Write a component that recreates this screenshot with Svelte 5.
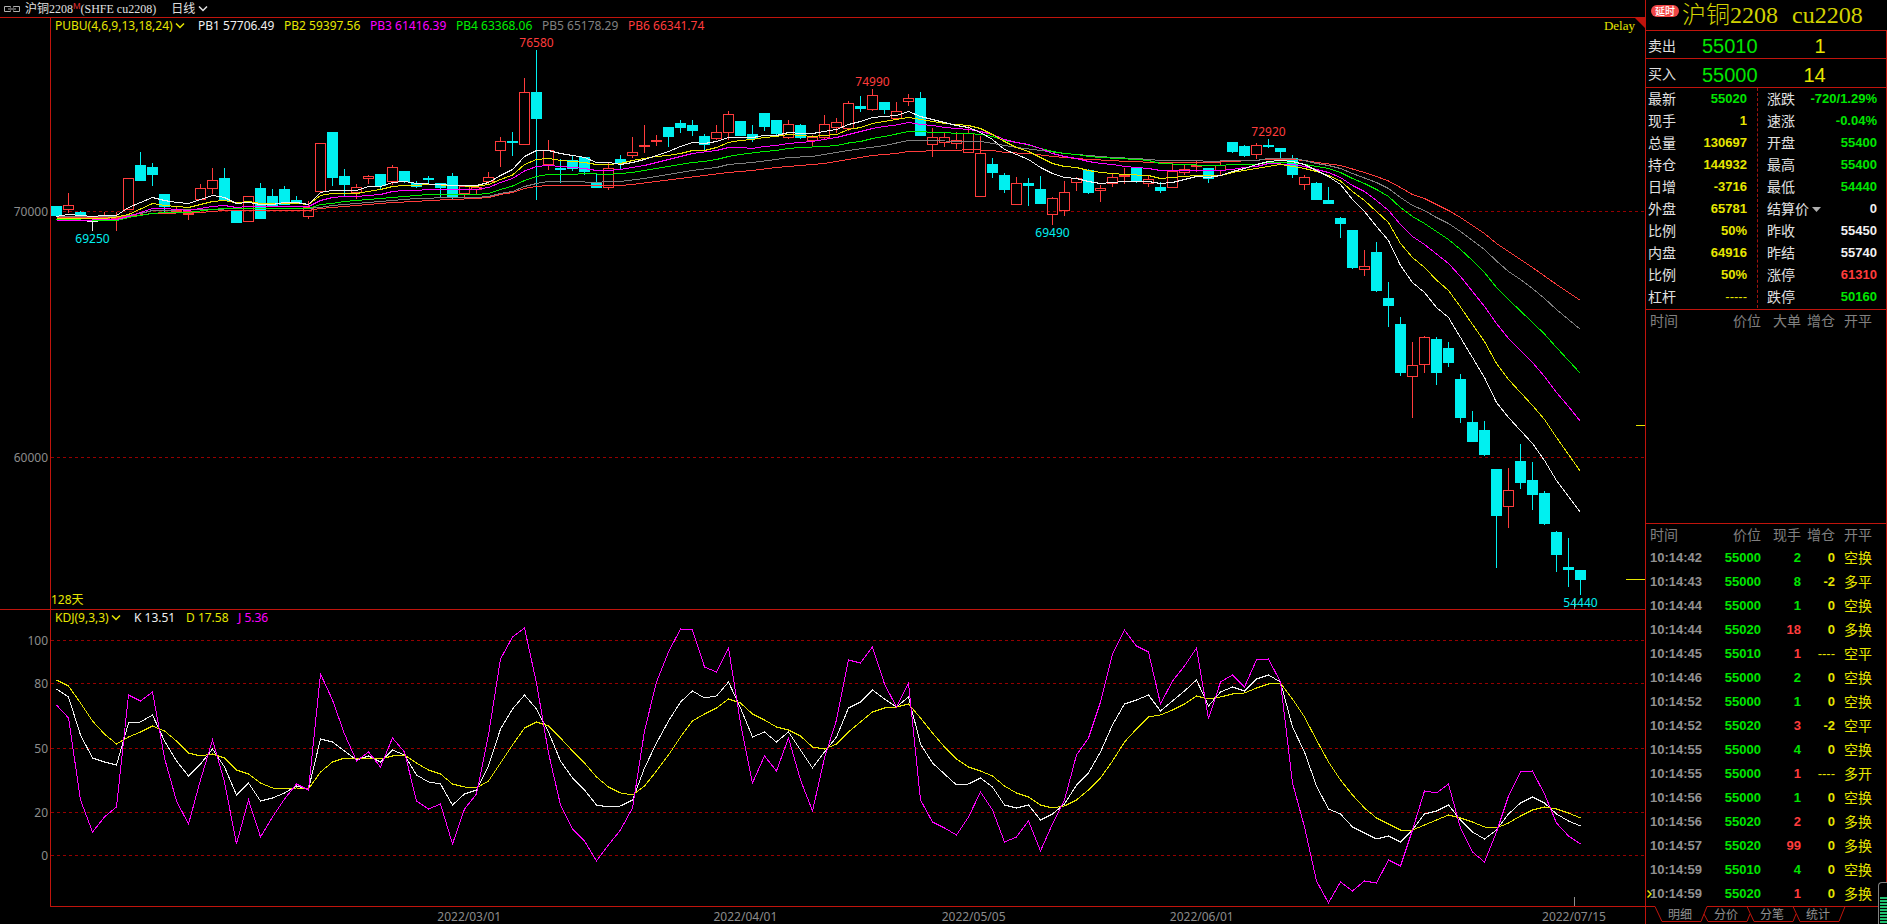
<script>
  const STEP = 12;
  const PLOT_LEFT = 51;
  const PLOT_WIDTH = 1594;

  const priceBox = { top: 18, height: 591 };
  const kdjBox = { top: 610, height: 296 };

  // kind: d = falling, u = rising, f = flat rising, w = doji
  // then high, body top, body bottom, low
  const candles = `
    d 206 206 216 216|u 193 205 210 213|d 211 212 216 216|w 219 221 222 231|f 212 217 219 220
    f 212 217 219 231|u 178 178 210 210|d 152 165 181 181|d 163 167 175 186|d 194 194 207 212
    f 207 209 212 212|f 209 211 215 220|u 184 188 200 200|u 168 180 189 194|d 168 178 201 201
    d 210 210 223 223|u 196 196 222 222|d 183 188 219 219|d 189 196 207 207|d 186 189 205 205
    d 196 200 203 203|u 201 207 217 219|u 143 143 192 192|d 132 132 178 186|d 169 176 185 196
    u 184 187 193 199|u 175 176 179 184|d 174 174 186 189|u 165 167 182 185|d 171 171 182 183
    d 181 183 187 188|d 176 178 180 184|d 183 183 188 197|d 173 176 197 199|u 186 186 194 197
    u 186 187 190 194|u 172 177 182 184|u 137 141 151 167|d 132 141 143 156|u 78 92 145 145
    d 50 92 119 200|u 140 150 165 170|d 159 168 170 183|d 156 160 169 171|d 157 157 172 175
    d 174 182 188 188|u 163 168 188 190|d 155 159 164 169|u 137 152 156 158|f 125 145 147 153
    f 135 140 142 146|d 127 127 137 147|d 120 123 128 133|d 120 125 131 136|d 134 136 145 150
    u 125 132 139 140|u 111 114 133 140|d 121 121 136 136|d 125 134 139 142|d 113 113 127 131
    d 120 120 134 136|u 120 124 138 139|d 124 125 138 139|u 135 137 141 147|u 115 124 138 139
    u 118 122 128 133|u 101 103 129 131|d 96 106 109 112|u 89 95 110 111|d 102 102 110 114
    u 102 111 119 119|u 94 98 102 106|d 92 98 136 136|u 128 137 145 157|u 133 137 143 147
    u 132 140 144 149|u 126 133 153 153|u 136 153 197 197|d 158 164 173 178|d 173 175 190 193
    u 177 183 205 205|d 178 183 186 206|d 176 189 204 204|u 197 198 215 225|u 181 192 211 216
    u 177 178 183 191|d 169 170 193 194|u 185 188 191 202|u 173 177 184 187|f 168 175 177 184
    d 167 167 181 183|u 176 179 184 187|d 182 187 191 193|u 163 171 188 188|u 165 169 173 175
    f 161 165 167 172|d 168 168 179 183|u 162 165 171 175|d 142 142 152 153|d 145 146 156 157
    u 143 145 155 159|d 139 145 147 148|d 148 148 152 158|d 155 158 175 178|u 175 177 185 190
    d 182 183 200 200|d 187 200 204 204|d 217 218 224 238|d 230 230 268 269|u 250 266 270 276
    d 242 252 291 292|d 282 298 306 327|d 317 324 373 376|u 342 365 377 418|u 336 337 365 373
    d 337 339 373 385|d 342 348 363 367|d 374 379 418 423|d 411 422 442 442|d 421 430 455 456
    d 469 469 516 568|u 468 490 507 528|d 444 461 483 489|d 462 480 495 510|d 491 493 524 525
    d 531 532 555 572|d 538 567 570 587|d 570 570 580 595`
    .trim()
    .split(/\||\n/)
    .map((row, i) => {
      const [kind, ...v] = row.trim().split(" ");
      const [high, top, bottom, low] = v.map(Number);
      return { kind, high, top, bottom, low, x: PLOT_LEFT + i * STEP };
    });

  const candleColors = { d: "#00f0f0", u: "#ff3c3c", f: "#ff3c3c", w: "#f0f0f0" };

  const center = (i) => PLOT_LEFT + i * STEP + 5.5;

  // "index,y" pairs
  const sparse = (text) =>
    text
      .trim()
      .split(/\s+/)
      .map((pair) => {
        const [i, y] = pair.split(",").map(Number);
        return `${center(i)},${y}`;
      })
      .join(" ");

  const dense = (text) =>
    text
      .trim()
      .split(/\s+/)
      .map((y, i) => `${center(i)},${y}`)
      .join(" ");

  const averages = [
    {
      name: "PB6",
      color: "#ff3c3c",
      points: sparse(`0,217.5 4,217.5 6,216.5 7,215 8,213.5 12,212.5 14,210.5 21,210.5 22,208.5 24,206.5 26,204.5
        28,202.5 30,201.5 31,200.5 33,199.5 35,198.5 36,197.5 37,194.5 38,192.5 39,188.5 40,186.5 41,185.5 47,185.5
        48,184.5 50,181.5 52,178.5 54,175.5 56,172.5 58,170.5 60,167.5 62,165.5 64,163.5 66,159.5 68,155.5 70,153.5
        71,151.5 72,151.5 73,150.5 75,150.5 76,149.5 78,150.5 79,152.5 81,153.5 83,156.5 84,157.5 86,159.5 88,160.5
        89,161.5 92,162.5 94,162.5 96,162.5 98,161.5 101,159.5 103,159.5 104,160.5 105,162.5 107,165.5 108,169
        109,172.5 110,176.5 111,181 112,187.5 113,194.5 114,198.5 115,204.5 116,210.5 117,217.5 118,225.5 119,233.5
        120,243.5 121,251.5 122,259.5 123,267.5 124,276 125,284.5 126,292.5 127,300.5`)
    },
    {
      name: "PB5",
      color: "#808080",
      points: sparse(`0,216.5 5,216.5 6,215.5 7,213.5 8,210.5 14,209 21,208.5 22,207.5 23,205.5 24,204.5 26,202.5
        28,200.5 30,198.5 33,197.5 35,197.5 36,196.5 37,193.5 38,191.5 39,186.5 40,183.5 41,181.5 43,181.5 45,182.5
        46,181.5 47,181.5 49,178.5 51,174.5 53,170.5 55,167.5 56,164.5 58,162.5 60,159.5 61,157.5 63,156.5 66,150.5
        69,145.5 71,140.5 77,141.5 78,143.5 80,147.5 82,150.5 84,153.5 86,155.5 88,157.5 90,158.5 92,160.5 95,160.5
        96,161.5 98,160.5 100,160.5 101,158.5 103,158.5 104,160.5 105,163.5 106,165.5 107,168.5 108,173.5 109,178
        110,182.5 111,188.5 112,197.5 113,205.5 114,210.5 115,217.5 116,223.5 117,231.5 118,240.5 119,249.5 120,261
        121,271.5 122,279.5 123,288.5 124,298.5 125,309.5 126,319.5 127,329.5`)
    },
    {
      name: "PB4",
      color: "#00f000",
      points: sparse(`0,219.5 2,220 5,220.5 6,217.5 7,215.5 8,213.5 9,212.5 11,212.5 12,211 13,209.5 14,208.5 21,208.5
        22,204.5 23,203.5 24,201.5 25,200.5 26,199.5 28,197.5 29,196.5 30,195.5 31,194.5 35,194.5 36,193.5 37,189.5
        38,186 39,180.5 40,176.5 41,174.5 43,174.5 44,173.5 46,174.5 47,173.5 48,172.5 49,170.5 50,168.5 51,166.5
        52,164.5 53,162.5 54,161.5 55,159.5 56,156.5 57,154.5 58,153 59,151.5 60,150.5 61,148.5 62,147.5 64,146.5
        65,145.5 66,143 67,141.5 68,138.5 69,136.5 70,134 71,131.5 72,131.5 73,132.5 74,132.5 75,133.5 76,133.5
        77,134.5 78,136.5 79,140.5 80,142.5 81,145 82,148.5 83,151.5 84,153.5 85,154.5 86,156.5 87,157.5 90,159.5
        91,160.5 92,163.5 94,164.5 96,165.5 97,165.5 98,164.5 100,164.5 101,162.5 103,162.5 104,164.5 105,166.5
        106,168.5 107,172.5 108,178.5 109,183.5 110,189.5 111,196.5 112,207.5 113,216.5 114,223.5 115,231.5
        116,239.5 117,249.5 118,260.5 119,272.5 120,287.5 121,299.5 122,311 123,322.5 124,334 125,347.5 126,360.5
        127,373.5`)
    },
    {
      name: "PB3",
      color: "#ff00ff",
      points: sparse(`0,220.5 2,220.5 4,219.5 5,219.5 6,216.5 7,212.5 8,208.5 9,208.5 10,209.5 11,210.5 12,208.5
        13,206.5 14,205.5 15,207.5 16,206.5 21,206.5 22,200.5 23,197.5 24,196.5 25,196.5 26,195.5 27,194.5 28,191.5
        29,190.5 30,190.5 31,189.5 35,189.5 36,187.5 37,182.5 38,178.5 39,171 40,166.5 41,165.5 42,166.5 43,167.5
        44,168.5 45,170.5 46,170.5 47,169.5 48,167.5 49,165.5 50,162.5 51,159.5 52,156.5 53,153.5 54,152 55,150.5
        56,147.5 57,147.5 58,148.5 59,146.5 60,145.5 61,143.5 62,142.5 63,141.5 64,139.5 65,137.5 66,134.5 67,131.5
        68,128.5 69,126.5 70,125 71,122.5 72,124.5 73,125.5 74,127.5 75,128.5 76,129.5 77,131.5 78,134.5 79,139.5
        80,142.5 81,144.5 82,148.5 83,153.5 84,156.5 85,158.5 86,161.5 87,163.5 88,164.5 89,166.5 90,167.5 91,168.5
        92,170.5 97,170.5 98,169.5 99,167.5 100,166.5 101,163.5 103,164.5 104,166.5 105,169.5 106,172.5 107,177.5
        108,185.5 109,191.5 110,200.5 111,210.5 112,224.5 113,236.5 114,244.5 115,254 116,263.5 117,276.5 118,291.5
        119,306.5 120,323.5 121,338.5 122,350.5 123,362.5 124,376.5 125,392.5 126,406.5 127,421.5`)
    },
    {
      name: "PB2",
      color: "#e6e600",
      points: sparse(`0,218.5 4,218.5 5,217 6,214.5 7,209 8,203.5 9,205.5 10,206.5 11,207.5 12,204.5 13,201.5 14,200.5
        15,203 16,201.5 17,203.5 20,203.5 21,204.5 22,195.5 23,193.5 25,193.5 26,191.5 27,189.5 28,186.5 29,185.5
        30,185.5 31,184.5 33,185.5 35,186.5 36,184.5 37,179.5 38,175 39,164.5 40,159.5 41,158.5 42,160.5 43,161.5
        44,162.5 45,164.5 46,164.5 47,163.5 48,160.5 49,158.5 50,156.5 51,155.5 52,153.5 53,150.5 54,150.5 55,147.5
        56,142.5 57,140.5 58,139.5 59,137.5 60,136.5 61,134.5 62,135.5 63,136.5 64,135.5 65,134.5 66,129.5 67,127.5
        68,123.5 69,121.5 70,119.5 71,117.5 72,119.5 73,121.5 74,123.5 75,124.5 76,125.5 77,128.5 78,134.5 79,141.5
        80,147.5 81,151.5 82,157.5 83,163.5 84,166.5 85,167.5 86,170.5 87,172.5 88,173.5 89,174.5 91,175.5 92,178.5
        93,177.5 94,176.5 95,175.5 97,175.5 98,172.5 99,170.5 100,168.5 101,166.5 102,164.5 103,166.5 104,168.5
        105,171.5 106,175.5 107,181 108,191.5 109,200.5 110,211.5 111,222.5 112,243.5 113,257.5 114,267.5 115,280
        116,290.5 117,307 118,324.5 119,341.5 120,363.5 121,379.5 122,392.5 123,405.5 124,419.5 125,437.5 126,454.5
        127,471.5`)
    },
    {
      name: "PB1",
      color: "#f0f0f0",
      points: sparse(`0,216.5 1,214.5 2,215.5 3,216.5 4,215.5 5,215.5 6,207.5 7,202.5 8,197.5 9,200.5 10,202.5
        11,203.5 12,199.5 13,195.5 14,197.5 15,203.5 16,202.5 17,204.5 18,204.5 19,202.5 20,202.5 21,204.5 22,192.5
        23,190.5 25,190.5 26,186.5 27,186.5 28,182.5 29,181.5 30,183.5 32,184.5 33,185.5 35,185.5 36,182.5 37,175.5
        38,169.5 39,156.5 40,150.5 41,150.5 42,153.5 43,155.5 44,157.5 45,162.5 46,162.5 47,164.5 48,162.5 49,159.5
        50,155.5 51,151.5 52,146.5 53,142.5 54,143.5 55,141.5 56,137.5 58,137.5 59,135.5 60,135.5 61,132.5 62,133.5
        63,133.5 64,131.5 65,129.5 66,124.5 67,121.5 68,117.5 69,116.5 70,115.5 71,111.5 72,116.5 73,119.5 74,122.5
        75,125.5 76,127.5 77,132.5 78,139.5 79,149.5 80,154.5 81,159.5 82,167.5 83,173.5 84,177.5 85,178.5 86,181.5
        87,183.5 88,182.5 89,181.5 91,181.5 92,183.5 93,182.5 94,179.5 95,176.5 96,177.5 97,175.5 98,171.5 99,168.5
        100,164.5 101,161.5 102,160.5 103,161.5 104,164.5 105,170.5 106,176.5 107,184.5 108,199.5 109,211.5
        110,226.5 111,240.5 112,265.5 113,282.5 114,292.5 115,307.5 116,317.5 117,337.5 118,357.5 119,377.5
        120,402.5 121,417.5 122,430.5 123,443.5 124,460.5 125,480.5 126,496.5 127,512.5`)
    }
  ];

  const kdj = [
    {
      name: "K",
      color: "#f0f0f0",
      points: dense(`689 697 735 758 762 765 723 722 715 741 761 776 764 749 767 795 783 801 798 793 786 789 739 742
        751 760 756 762 750 755 775 782 784 805 794 790 766 729 709 695 709 732 761 778 790 805 807 806 800 768 743
        721 702 691 698 696 682 708 737 732 742 732 750 768 752 737 708 702 690 699 707 697 744 763 774 785 784 778
        787 805 808 805 820 814 804 785 773 752 725 704 700 695 711 701 691 680 706 692 687 691 679 675 682 727 752
        786 809 814 827 833 839 836 842 830 814 811 805 820 832 839 830 814 803 797 803 814 821 826`)
    },
    {
      name: "D",
      color: "#e6e600",
      points: dense(`680 686 703 721 734 744 737 732 726 731 741 753 756 754 758 770 774 783 788 789 788 789 772 762
        758 758 758 759 756 755 763 770 774 784 787 788 781 763 745 728 722 726 738 751 763 777 787 793 795 786 771
        755 737 721 714 708 699 703 714 720 727 730 736 747 749 744 732 722 712 708 707 704 718 733 747 759 767 771
        776 786 793 797 805 808 806 800 790 778 761 742 729 717 715 710 704 696 699 697 694 693 688 684 683 699 717
        740 762 780 795 808 818 824 830 830 825 820 815 818 822 827 828 823 816 810 807 809 813 818`)
    },
    {
      name: "J",
      color: "#ff00ff",
      points: dense(`705 718 800 832 817 807 695 701 692 758 801 824 780 740 782 844 800 837 817 799 784 790 674 700
        734 761 752 767 738 752 801 809 804 844 809 794 735 659 637 628 683 753 805 829 841 861 845 830 808 731 682
        652 629 630 667 672 648 723 783 756 771 738 780 811 758 720 660 663 647 684 707 683 800 822 828 835 817 792
        810 842 837 821 851 824 800 755 738 702 654 630 646 652 704 681 666 648 719 682 675 687 660 659 682 783 827
        881 903 882 891 881 883 860 866 830 791 793 784 828 852 862 832 796 772 771 794 823 836 844`)
    }
  ];

  const pubuLegend = [
    ["PB1 57706.49", "white"],
    ["PB2 59397.56", "yellow"],
    ["PB3 61416.39", "magenta"],
    ["PB4 63368.06", "lime"],
    ["PB5 65178.29", "gray"],
    ["PB6 66341.74", "red"]
  ];

  const kdjLegend = [
    ["K 13.51", "white"],
    ["D 17.58", "yellow"],
    ["J 5.36", "magenta"]
  ];

  const priceScale = [
    [70000, 211],
    [60000, 457]
  ];

  const kdjScale = [
    [100, 640],
    [80, 683],
    [50, 748],
    [20, 812],
    [0, 855]
  ];

  const marks = [
    { text: "76580", x: 536.5, y: 43, high: true },
    { text: "74990", x: 872.5, y: 82, high: true },
    { text: "72920", x: 1268.5, y: 132, high: true },
    { text: "69250", x: 92.5, y: 239 },
    { text: "69490", x: 1052.5, y: 233 },
    { text: "54440", x: 1580.5, y: 603 }
  ];

  const dates = [
    ["2022/03/01", 470],
    ["2022/04/01", 746],
    ["2022/05/05", 974],
    ["2022/06/01", 1202],
    ["2022/07/15", 1574]
  ];

  const px = (x) => `${((x - PLOT_LEFT) / PLOT_WIDTH) * 100}%`;
  const py = (y, box) => `${((y - box.top) / box.height) * 100}%`;

  const quoteLeft = [
    ["最新", "55020", "green"],
    ["现手", "1", "yellow"],
    ["总量", "130697", "yellow"],
    ["持仓", "144932", "yellow"],
    ["日增", "-3716", "yellow"],
    ["外盘", "65781", "yellow"],
    ["比例", "50%", "yellow"],
    ["内盘", "64916", "yellow"],
    ["比例", "50%", "yellow"],
    ["杠杆", "-----", "yellow"]
  ];

  const quoteRight = [
    ["涨跌", "-720/1.29%", "green"],
    ["速涨", "-0.04%", "green"],
    ["开盘", "55400", "green"],
    ["最高", "55400", "green"],
    ["最低", "54440", "green"],
    ["结算价", "0", "white"],
    ["昨收", "55450", "white"],
    ["昨结", "55740", "white"],
    ["涨停", "61310", "red"],
    ["跌停", "50160", "green"]
  ];

  const ticks = [
    ["10:14:42", "55000", "2", "green", "0", "空换"],
    ["10:14:43", "55000", "8", "green", "-2", "多平"],
    ["10:14:44", "55000", "1", "green", "0", "空换"],
    ["10:14:44", "55020", "18", "red", "0", "多换"],
    ["10:14:45", "55010", "1", "red", "----", "空平"],
    ["10:14:46", "55000", "2", "green", "0", "空换"],
    ["10:14:52", "55000", "1", "green", "0", "空换"],
    ["10:14:52", "55020", "3", "red", "-2", "空平"],
    ["10:14:55", "55000", "4", "green", "0", "空换"],
    ["10:14:55", "55000", "1", "red", "----", "多开"],
    ["10:14:56", "55000", "1", "green", "0", "空换"],
    ["10:14:56", "55020", "2", "red", "0", "多换"],
    ["10:14:57", "55020", "99", "red", "0", "多换"],
    ["10:14:59", "55010", "4", "green", "0", "空换"],
    ["10:14:59", "55020", "1", "red", "0", "多换"]
  ];

  const isEmpty = (value) => value.startsWith("--");

  const tabs = ["明细", "分价", "分笔", "统计"];
  let activeTab = "明细";
</script>

<style>
  :global(body) {
    margin: 0;
    background: #000;
  }

  .terminal {
    --line: #c0140c;
    --cjk: "Noto Sans CJK SC";
    display: grid;
    grid-template-columns: minmax(0, 1fr) 242px;
    height: 100vh;
    min-height: 760px;
    background: #000;
    color: #e0e0e0;
    font-family: "Noto Sans", var(--cjk), sans-serif;
    font-size: 12px;
    overflow: hidden;
  }

  button {
    display: inline-flex;
    align-items: center;
    padding: 0;
    border: 0;
    background: none;
    color: inherit;
    font: inherit;
    cursor: pointer;
  }

  .white { color: #f0f0f0; }
  .yellow { color: #e6e600; }
  .magenta { color: #ff00ff; }
  .lime { color: #00f000; }
  .green { color: #00e600; }
  .gray { color: #808080; }
  .red { color: #ff3c3c; }

  /* chart side */
  .main {
    display: grid;
    grid-template-rows: 17px minmax(0, 592fr) minmax(0, 297fr) 18px;
    min-width: 0;
  }

  .title {
    display: flex;
    align-items: center;
    padding-left: 3px;
    font-family: "Liberation Serif", var(--cjk), serif;
    line-height: 16px;
    white-space: pre;
  }

  .title .link {
    margin-right: 4px;
  }

  .title sup {
    align-self: flex-start;
    color: #e03030;
    font: 9px/12px "Liberation Sans", sans-serif;
  }

  .title .period {
    margin-left: 15px;
    gap: 3px;
  }

  .pane {
    display: grid;
    grid-template-columns: 50px minmax(0, 1fr);
    border-top: 1px solid var(--line);
    min-height: 0;
  }

  .axis {
    width: 100%;
    height: 100%;
    overflow: visible;
  }

  .axis text,
  .dates text {
    fill: #8c8c8c;
  }

  .axis text {
    text-anchor: end;
  }

  .plot {
    position: relative;
    border-left: 1px solid var(--line);
    min-width: 0;
    min-height: 0;
  }

  .plot > svg {
    position: absolute;
    inset: 0;
    width: 100%;
    height: 100%;
    overflow: visible;
  }

  .shapes {
    shape-rendering: crispEdges;
  }

  .shapes polyline,
  .shapes line {
    fill: none;
    vector-effect: non-scaling-stroke;
  }

  .grid {
    stroke: #960000;
    stroke-dasharray: 3 3;
  }

  .marks {
    text-anchor: middle;
  }

  .legend {
    position: relative;
    z-index: 1;
    display: flex;
    align-items: center;
    height: 15px;
    padding-left: 4px;
    white-space: nowrap;
  }

  .legend button {
    gap: 2px;
  }

  .pubu button {
    width: 143px;
  }

  .pubu span {
    width: 86px;
  }

  .kdj button {
    width: 79px;
  }

  .kdj span {
    width: 52px;
  }

  .delay {
    position: absolute;
    z-index: 1;
    top: 0;
    right: 0;
    display: flex;
    color: #e6e600;
    font: 13px/16px "Liberation Serif", serif;
  }

  .days {
    position: absolute;
    z-index: 1;
    left: 0;
    bottom: 0;
    color: #e6e600;
    line-height: 18px;
  }

  .footer {
    display: flex;
    padding-left: 50px;
    min-width: 0;
  }

  .dates {
    flex: 1;
    height: 18px;
    border-top: 1px solid var(--line);
    box-sizing: border-box;
    overflow: visible;
    text-anchor: middle;
  }

  /* quote side */
  .side {
    position: relative;
    display: flex;
    flex-direction: column;
    border-left: 1px solid var(--line);
    font-family: "Liberation Sans", var(--cjk), sans-serif;
    font-size: 14px;
    min-width: 0;
  }

  .name {
    display: flex;
    align-items: center;
    height: 30px;
    margin: 0;
    padding-left: 5px;
    color: #d2d200;
    font: 300 24px/30px "Liberation Serif", var(--cjk), serif;
    white-space: nowrap;
  }

  .name .code {
    margin-left: 14px;
  }

  .badge {
    align-self: flex-start;
    width: 28px;
    height: 12px;
    margin: 5px 3px 0 0;
    border-radius: 6px;
    background: #f04646;
    color: #fff;
    font: 500 10px/12px var(--cjk), sans-serif;
    text-align: center;
  }

  .body {
    flex: 1;
    display: flex;
    flex-direction: column;
    border-right: 1px solid var(--line);
    min-height: 0;
  }

  .order {
    display: grid;
    grid-template-columns: 54px 1fr 68px;
    align-items: center;
    height: 28px;
    padding: 0 66px 0 2px;
    border-top: 1px solid var(--line);
    box-sizing: border-box;
  }

  .order + .order {
    height: 29px;
  }

  .order strong {
    padding-top: 3px;
    font-size: 20px;
    font-weight: 400;
    line-height: 24px;
  }

  .order strong:last-child {
    text-align: right;
  }

  .quotes {
    display: grid;
    grid-template-columns: 111px 1fr;
    border-top: 1px solid var(--line);
    border-bottom: 1px solid var(--line);
    padding-bottom: 1px;
  }

  .quotes dl {
    margin: 0;
    padding: 0 10px 0 2px;
  }

  .quotes dl:last-child {
    padding: 0 9px 0 9px;
    border-left: 1px dashed #a01410;
  }

  .quotes dl div {
    display: flex;
    justify-content: space-between;
    height: 22px;
    line-height: 22px;
  }

  .quotes dd {
    margin: 0;
    font-size: 13px;
    font-weight: 700;
  }

  .quotes button {
    gap: 3px;
    height: 22px;
  }

  .big {
    flex: 1;
    min-height: 21px;
    border-bottom: 1px solid var(--line);
  }

  table {
    width: 100%;
    border-collapse: collapse;
    table-layout: fixed;
  }

  th,
  td {
    padding: 0;
    text-align: right;
    white-space: nowrap;
  }

  th {
    height: 22px;
    color: #808080;
    font-weight: 400;
    line-height: 22px;
  }

  td {
    height: 24px;
    font-size: 13px;
    font-weight: 700;
    line-height: 24px;
  }

  th:first-child,
  td:first-child {
    width: 60px;
    padding-left: 4px;
    text-align: left;
  }

  td:first-child {
    position: relative;
    color: #909090;
  }

  th:nth-child(2) { width: 51px; }
  th:nth-child(3) { width: 40px; }
  th:nth-child(4) { width: 34px; }

  th:last-child,
  td:last-child {
    padding-left: 9px;
    text-align: left;
  }

  td:last-child {
    font-size: 14px;
    font-weight: 400;
  }

  .quotes dd.empty,
  td.empty {
    font-weight: 400;
  }

  .cursor {
    position: absolute;
    left: 1px;
    top: 8px;
  }

  .tabs {
    position: relative;
    display: flex;
    height: 18px;
    padding-left: 22px;
  }

  .tabs svg {
    position: absolute;
    left: 0;
    top: 0;
    pointer-events: none;
  }

  .tabs button {
    width: 46px;
    height: 17px;
    color: #909090;
    font-size: 12px;
    line-height: 16px;
  }

  .meter {
    position: absolute;
    right: 0;
    bottom: 0;
    width: 9px;
    height: 42px;
    box-sizing: border-box;
    padding: 14px 0 0 1px;
    border: solid #808080;
    border-width: 1px 0 0 1px;
    border-radius: 4px 0 0 0;
    background: #000;
  }

  .meter i {
    display: block;
    height: 100%;
    background: repeating-linear-gradient(#20c070 0 2px, #000 2px 3px);
  }
</style>

{#snippet chevron()}
  <svg width="10" height="6" viewBox="0 0 10 6" aria-hidden="true">
    <path d="M1 .5 5 4.5 9 .5" fill="none" stroke="currentColor" stroke-width="1.5" />
  </svg>
{/snippet}

<div class="terminal">
  <main class="main">
    <header class="title">
      <svg class="link" width="18" height="8" viewBox="0 0 18 8" fill="none" stroke="#b0b0b0" aria-hidden="true">
        <path d="M7.5 2.5V1.5H1.5V6.5H7.5V5.5M10.5 2.5V1.5H16.5V6.5H10.5V5.5M5 4H13" />
      </svg>
      <span>沪铜2208</span><sup>M</sup><span> (SHFE cu2208)</span>
      <button class="period">日线{@render chevron()}</button>
    </header>

    <section class="pane">
      <svg class="axis">
        {#each priceScale as [label, y]}
          <text x="48" y={py(y, priceBox)} dy="5">{label}</text>
        {/each}
      </svg>
      <div class="plot">
        <div class="legend pubu">
          <button class="yellow">PUBU(4,6,9,13,18,24){@render chevron()}</button>
          {#each pubuLegend as [text, color]}
            <span class={color}>{text}</span>
          {/each}
        </div>
        <div class="delay">
          Delay
          <svg width="10" height="10" viewBox="0 0 10 10" aria-hidden="true"><path d="M0 0H10V10Z" fill="#c0140c" /></svg>
        </div>
        <svg
          class="shapes"
          viewBox="{PLOT_LEFT} {priceBox.top} {PLOT_WIDTH} {priceBox.height}"
          preserveAspectRatio="none">
          {#each priceScale as [, y]}
            <line class="grid" x1="51" x2="1645" y1={y + 0.5} y2={y + 0.5} />
          {/each}
          {#each candles as c}
            {#if c.kind === "u"}
              <rect x={c.x + 5} y={c.high} width="1" height={c.top - c.high} fill={candleColors.u} />
              <rect x={c.x + 5} y={c.bottom} width="1" height={c.low - c.bottom} fill={candleColors.u} />
              <rect
                x={c.x + 0.5}
                y={c.top + 0.5}
                width="10"
                height={c.bottom - c.top - 1}
                fill="none"
                stroke={candleColors.u} />
            {:else}
              <rect x={c.x + 5} y={c.high} width="1" height={c.low - c.high} fill={candleColors[c.kind]} />
              <rect x={c.x} y={c.top} width="11" height={c.bottom - c.top} fill={candleColors[c.kind]} />
            {/if}
          {/each}
          {#each averages as line}
            <polyline points={line.points} stroke={line.color} />
          {/each}
          <line x1="1636" x2="1645" y1="425.5" y2="425.5" stroke="#e6e600" />
          <line x1="1626" x2="1645" y1="579.5" y2="579.5" stroke="#e6e600" />
          <line x1="1574.5" x2="1574.5" y1="599" y2="609" stroke="#909090" />
        </svg>
        <svg class="marks">
          {#each marks as m}
            <text x={px(m.x)} y={py(m.y, priceBox)} dy="4" fill={m.high ? "#ff3c3c" : "#00f0f0"}>{m.text}</text>
          {/each}
        </svg>
        <span class="days">128天</span>
      </div>
    </section>

    <section class="pane">
      <svg class="axis">
        {#each kdjScale as [label, y]}
          <text x="48" y={py(y, kdjBox)} dy="5">{label}</text>
        {/each}
      </svg>
      <div class="plot">
        <div class="legend kdj">
          <button class="yellow">KDJ(9,3,3){@render chevron()}</button>
          {#each kdjLegend as [text, color]}
            <span class={color}>{text}</span>
          {/each}
        </div>
        <svg
          class="shapes"
          viewBox="{PLOT_LEFT} {kdjBox.top} {PLOT_WIDTH} {kdjBox.height}"
          preserveAspectRatio="none">
          {#each kdjScale as [, y]}
            <line class="grid" x1="51" x2="1645" y1={y + 0.5} y2={y + 0.5} />
          {/each}
          {#each kdj as line}
            <polyline points={line.points} stroke={line.color} />
          {/each}
          <line x1="1574.5" x2="1574.5" y1="897" y2="906" stroke="#909090" />
        </svg>
      </div>
    </section>

    <footer class="footer">
      <svg class="dates">
        {#each dates as [label, x]}
          <text x={px(x)} y="14">{label}</text>
        {/each}
      </svg>
    </footer>
  </main>

  <aside class="side">
    <h1 class="name">
      <span class="badge">延时</span>沪铜2208<span class="code">cu2208</span>
    </h1>
    <div class="body">
      <div class="order">
        <span>卖出</span>
        <strong class="green">55010</strong>
        <strong class="yellow">1</strong>
      </div>
      <div class="order">
        <span>买入</span>
        <strong class="green">55000</strong>
        <strong class="yellow">14</strong>
      </div>

      <div class="quotes">
        {#each [quoteLeft, quoteRight] as rows}
          <dl>
            {#each rows as [label, value, color]}
              <div>
                <dt>
                  {#if label === "结算价"}
                    <button>
                      {label}
                      <svg width="9" height="5" viewBox="0 0 9 5" aria-hidden="true">
                        <path d="M0 0H9L4.5 5Z" fill="#b0b0b0" />
                      </svg>
                    </button>
                  {:else}
                    {label}
                  {/if}
                </dt>
                <dd class={color} class:empty={isEmpty(value)}>{value}</dd>
              </div>
            {/each}
          </dl>
        {/each}
      </div>

      <div class="big">
        <table>
          <thead>
            <tr><th>时间</th><th>价位</th><th>大单</th><th>增仓</th><th>开平</th></tr>
          </thead>
        </table>
      </div>

      <table>
        <thead>
          <tr><th>时间</th><th>价位</th><th>现手</th><th>增仓</th><th>开平</th></tr>
        </thead>
        <tbody>
          {#each ticks as [time, price, volume, color, delta, type], i}
            <tr>
              <td>
                {#if i === ticks.length - 1}
                  <svg class="cursor" width="5" height="8" viewBox="0 0 5 8" aria-hidden="true">
                    <path d="M.5 .5 4 4 .5 7.5" fill="none" stroke="#e6e600" stroke-width="1.5" />
                  </svg>
                {/if}
                {time}
              </td>
              <td class="green">{price}</td>
              <td class={color}>{volume}</td>
              <td class="yellow" class:empty={isEmpty(delta)}>{delta}</td>
              <td class="yellow">{type}</td>
            </tr>
          {/each}
        </tbody>
      </table>
    </div>

    <nav class="tabs">
      <svg width="241" height="18" viewBox="0 0 241 18" fill="none" stroke="#c0140c" aria-hidden="true">
        <path d="M0 .5H9L16 15.5H55L61 .5H241" />
        <path d="M58 8 62 15.5H101L104 8M101 .5 108 15.5H147L150 8M147 .5 154 15.5H193L199 .5" />
      </svg>
      {#each tabs as tab}
        <button aria-pressed={activeTab === tab} on:click={() => (activeTab = tab)}>{tab}</button>
      {/each}
    </nav>
    <div class="meter"><i></i></div>
  </aside>
</div>
